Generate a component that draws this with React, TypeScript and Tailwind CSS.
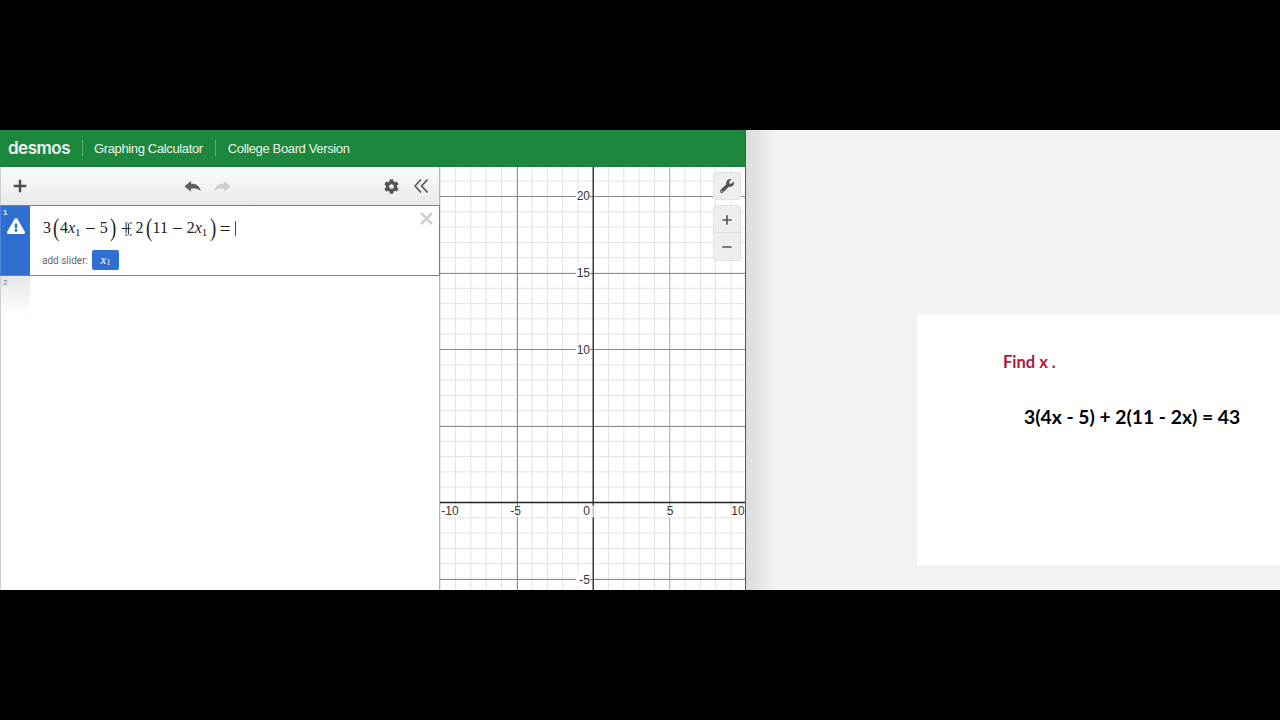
import { Plus, X, Minus } from "lucide-react";
import { FaCog, FaWrench, FaExclamationTriangle } from "react-icons/fa";

const TICK = 76.5;
const OX = 153.25; // x of the y axis inside the graph
const OY = 335.5; // y of the x axis inside the graph

function Graph() {
  const minorX: number[] = [];
  const minorY: number[] = [];
  for (let i = -10; i <= 10; i++) minorX.push(OX + (i * TICK) / 5);
  for (let i = -6; i <= 22; i++) minorY.push(OY - (i * TICK) / 5);
  const xLabels: [string, number][] = [
    ["-10", 10],
    ["-5", 75.5],
    ["0", 146.5],
    ["5", 230],
    ["10", 298],
  ];
  const yLabels: [string, number][] = [
    ["20", 29],
    ["15", 106],
    ["10", 182.5],
    ["-5", 412.5],
  ];
  return (
    <svg width="305" height="423" className="block" style={{ fontFamily: '"Liberation Sans", Arial, sans-serif' }}>
      <rect width="305" height="423" fill="#ffffff" />
      {minorX.map((x) => (
        <line key={"x" + x} x1={x} x2={x} y1="0" y2="423" stroke="#e2e2e2" strokeWidth="1" />
      ))}
      {minorY.map((y) => (
        <line key={"y" + y} x1="0" x2="305" y1={y} y2={y} stroke="#e2e2e2" strokeWidth="1" />
      ))}
      <line x1="77.5" x2="77.5" y1="0" y2="423" stroke="#8f8f8f" strokeWidth="1" />
      <line x1={OX + TICK} x2={OX + TICK} y1="0" y2="423" stroke="#b0b0b0" strokeWidth="1" />
      {[-1, 1, 2, 3, 4].map((k) => (
        <line key={k} x1="0" x2="305" y1={Math.floor(OY - k * TICK) + 0.5} y2={Math.floor(OY - k * TICK) + 0.5} stroke="#8a8a8a" strokeWidth="1" />
      ))}
      <line x1={OX} x2={OX} y1="0" y2="423" stroke="#3c3c3c" strokeWidth="1.5" />
      <line x1="0" x2="305" y1={OY} y2={OY} stroke="#222222" strokeWidth="1.5" />
      <g opacity="0.99">
        {xLabels.map(([t, x]) => (
          <g key={"xl" + t}>
            <rect x={x - 9} y={OY + 3} width="18" height="12" fill="#ffffff" fillOpacity="0.7" />
            <text x={x} y={OY + 12.5} textAnchor="middle" fontSize="12" fill="#333333">{t}</text>
          </g>
        ))}
        {yLabels.map(([t, y]) => (
          <g key={"yl" + t}>
            <rect x="136" y={y - 6} width="14" height="12" fill="#ffffff" />
            <text x="150" y={y + 4} textAnchor="end" fontSize="12" fill="#333333">{t}</text>
          </g>
        ))}
      </g>
    </svg>
  );
}

function Sub() {
  return <span className="text-[11px] leading-none relative top-[4px] w-[6px]">1</span>;
}

function Paren({ c, className }: { c: string; className: string }) {
  return <span className={"text-[25px] leading-none font-light scale-x-[0.75] inline-block relative top-[-1px] w-[7px] text-center " + className}>{c}</span>;
}

function Expression() {
  return (
    <div className="flex items-center h-[24px] text-[16px] text-[#222222] whitespace-nowrap" style={{ fontFamily: '"Liberation Serif", "Times New Roman", serif' }}>
      <span>3</span>
      <Paren c="(" className="ml-[1px]" />
      <span className="ml-[1px]">4</span>
      <i>x</i>
      <Sub />
      <span className="ml-[4px] text-[19px] leading-none">−</span>
      <span className="ml-[4px]">5</span>
      <Paren c=")" className="ml-[1px]" />
      <span className="ml-[5px] text-[19px] leading-none relative">
        +
        <svg width="9" height="14" viewBox="0 0 9 14" className="absolute left-[3px] top-[3px]">
          <path d="M1 1h2.5M5.5 1H8M4.5 1.5v11M1 13h2.5M5.5 13H8" stroke="#333" strokeWidth="1" fill="none" />
        </svg>
      </span>
      <span className="ml-[4px]">2</span>
      <Paren c="(" className="ml-[1px]" />
      <span className="ml-[1px]">11</span>
      <span className="ml-[4px] text-[19px] leading-none">−</span>
      <span className="ml-[4px]">2</span>
      <i>x</i>
      <Sub />
      <Paren c=")" className="ml-[1px]" />
      <span className="ml-[4px] text-[19px] leading-none">=</span>
      <span className="ml-[4px] w-px h-[15px] bg-[#444444]" />
    </div>
  );
}

export default function App() {
  return (
    <div className="w-[1280px] h-[720px] bg-black flex flex-col overflow-hidden">
      <div className="h-[130px] shrink-0" />
      <div className="h-[460px] flex shrink-0">
        <div className="w-[746px] flex flex-col shrink-0 border-r border-[#555555]">
          <header className="h-[37px] bg-[#1c873d] flex items-center text-white shrink-0 border-b border-[#1a7a38]" style={{ fontFamily: '"Liberation Sans", Arial, sans-serif' }}>
            <span className="ml-[8px] w-[63px] text-[17px] font-semibold tracking-[-0.5px] pt-[2px] text-[#eef6f0]" style={{ fontFamily: 'Inter, sans-serif' }}>desmos</span>
            <span className="ml-[11px] w-px h-[16px] bg-[#5cab74]" />
            <span className="ml-[11px] pt-[1px] text-[13px] tracking-[-0.36px] text-[#eaf4ec]">Graphing Calculator</span>
            <span className="ml-[12px] w-px h-[16px] bg-[#5cab74]" />
            <span className="ml-[12px] pt-[1px] text-[13px] tracking-[-0.36px] text-[#eaf4ec]">College Board Version</span>
          </header>
          <div className="flex flex-1 min-h-0">
            <aside className="w-[440px] shrink-0 bg-white flex flex-col border-l border-[#cfcfcf] border-r border-r-[#b5b5b5]">
              <div className="h-[38px] shrink-0 flex items-center bg-gradient-to-b from-[#fbfbfb] to-[#e9e9e9] text-[#555555]">
                <Plus size={18} strokeWidth={3.2} className="ml-[10px] text-[#4d4d4d]" />
                <div className="ml-[155px] flex items-center gap-[13px]">
                  <svg width="17" height="12" viewBox="0 0 18 12" className="text-[#5f5f5f]">
                    <path d="M0.5 6.5 L7.5 0.5 V3.6 C13 3.2 16.5 6 17.8 11.5 C15 9 12 8.6 7.5 8.8 V12 Z" fill="currentColor" />
                  </svg>
                  <svg width="17" height="12" viewBox="0 0 18 12" className="text-[#cdcdcd] -scale-x-100">
                    <path d="M0.5 6.5 L7.5 0.5 V3.6 C13 3.2 16.5 6 17.8 11.5 C15 9 12 8.6 7.5 8.8 V12 Z" fill="currentColor" />
                  </svg>
                </div>
                <FaCog size={15} className="ml-[153px] text-[#555555]" />
                <svg width="14" height="14" viewBox="0 0 14 14" className="ml-[15px] text-[#555555]">
                  <path d="M7 0.5 L1 7 L7 13.5 M13.5 0.5 L7.5 7 L13.5 13.5" fill="none" stroke="currentColor" strokeWidth="1.6" />
                </svg>
              </div>
              <div className="h-[71px] shrink-0 flex p-px bg-[#4f86dc] relative -ml-px -mr-px">
                <div className="w-[29px] bg-[#2f6fd0] relative shrink-0 flex justify-center pt-[11px]">
                  <span className="absolute left-[2px] top-[1px] text-[8px] font-bold text-[#dce8fa]" style={{ fontFamily: '"Liberation Sans", sans-serif' }}>1</span>
                  <FaExclamationTriangle size={18} className="text-white" />
                </div>
                <div className="flex-1 pl-[13px] pt-[10px] flex flex-col bg-white">
                  <Expression />
                  <div className="flex items-center mt-[10px] -ml-[1px]">
                    <span className="text-[10px] text-[#666666]" style={{ fontFamily: 'Roboto, sans-serif' }}>add slider:</span>
                    <span className="ml-[4px] w-[27px] h-[20px] rounded-[2px] bg-[#2f6fd0] text-white text-[13px] flex items-center justify-center" style={{ fontFamily: '"Liberation Serif", serif' }}>
                      <i>x</i><span className="text-[8px] relative top-[3px]">1</span>
                    </span>
                  </div>
                </div>
                <X size={19} strokeWidth={3.4} className="absolute right-[4px] top-[4px] text-[#d0d0d0]" />
              </div>
              <div className="h-[39px] shrink-0 flex">
                <div className="w-[29px] bg-gradient-to-b from-[#e6e6e6] to-[#ffffff] relative">
                  <span className="absolute left-[2px] top-[1px] text-[8px] text-[#777777]" style={{ fontFamily: '"Liberation Sans", sans-serif' }}>2</span>
                </div>
              </div>
            </aside>
            <main className="relative flex-1 min-w-0">
              <Graph />
              <div className="absolute left-[273px] top-[5px] w-[28px] h-[28px] rounded-[3px] bg-[#eeeeee] border border-[#e2e2e2] flex items-center justify-center">
                <FaWrench size={14} className="text-[#555555]" />
              </div>
              <div className="absolute left-[273px] top-[38px] w-[28px] flex flex-col rounded-[3px] bg-[#eeeeee] border border-[#e2e2e2]">
                <div className="h-[27px] pt-[2px] flex items-center justify-center border-b border-[#dddddd]">
                  <Plus size={14} strokeWidth={2.8} className="text-[#555555]" />
                </div>
                <div className="h-[27px] pt-[1px] flex items-center justify-center">
                  <Minus size={14} strokeWidth={2.8} className="text-[#555555]" />
                </div>
              </div>
            </main>
          </div>
        </div>
        <div className="flex-1 flex flex-col bg-[#f2f2f2] relative">
          <div className="absolute left-0 top-0 bottom-0 w-[30px] bg-gradient-to-r from-[#dcdcdc] to-[#f2f2f2]" />
          <div className="mt-[184px] ml-auto w-[363px] h-[251px] bg-white relative" style={{ fontFamily: 'Lato, sans-serif' }}>
            <p className="pt-[37px] pl-[86px] text-[16.5px] leading-[22px] font-bold text-[#b5123e]">Find x .</p>
            <p className="mt-[31px] pl-[107px] text-[19.3px] leading-[26px] font-bold text-black whitespace-nowrap">3(4x - 5) + 2(11 - 2x) = 43</p>
          </div>
        </div>
      </div>
      <div className="flex-1" />
    </div>
  );
}
